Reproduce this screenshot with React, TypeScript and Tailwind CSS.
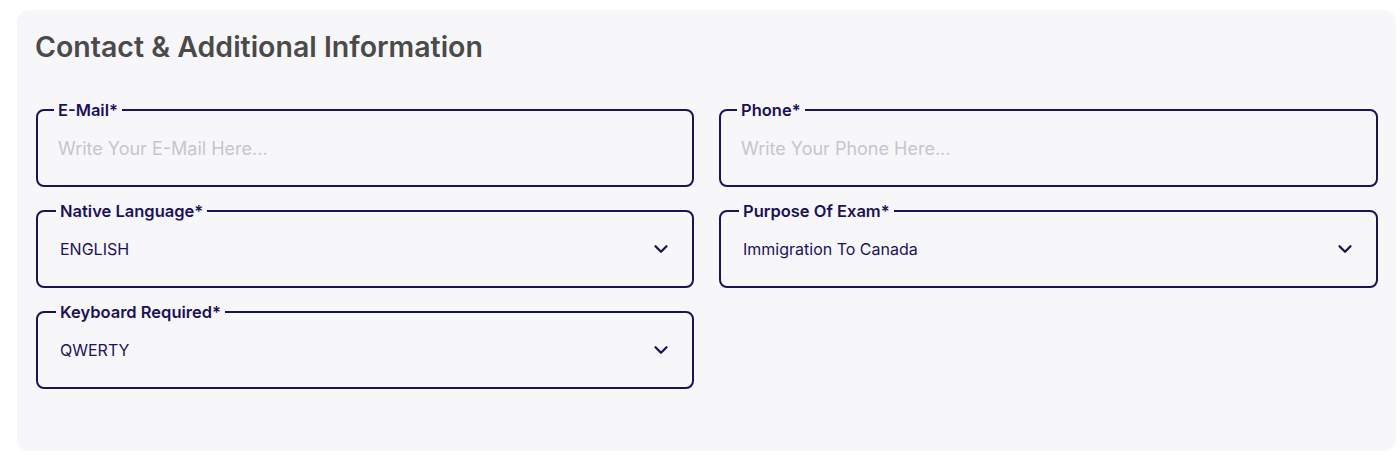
import React from 'react'
import { ChevronDown } from 'lucide-react'

const navy = 'border-[#1b1257]'

function TextField({ label, placeholder }: { label: string; placeholder: string }) {
  return (
    <fieldset className={`border-2 ${navy} rounded-lg px-[20px] pb-[24px]`}>
      <legend className="ml-[-4px] px-[4px] text-[16.5px] leading-[20px] font-semibold text-[#1b1257]">{label}</legend>
      <input
        type="text"
        placeholder={placeholder}
        className="w-full bg-transparent pt-[17px] text-[18px] leading-[24px] text-[#1b1257] outline-none placeholder:text-[#c6c6c9]"
      />
    </fieldset>
  )
}

function SelectField({ label, value }: { label: string; value: string }) {
  return (
    <fieldset className={`border-2 ${navy} rounded-lg pl-[22px] pr-[20px] pb-[25px]`}>
      <legend className="ml-[-4px] px-[4px] text-[16.5px] leading-[20px] font-semibold text-[#1b1257]">{label}</legend>
      <div className="flex items-center justify-between pt-[16px] h-[40px]">
        <span className="text-[16px] text-[#1b1257]">{value}</span>
        <ChevronDown className="w-[22px] h-[22px] text-[#1b1257]" strokeWidth={2.5} />
      </div>
    </fieldset>
  )
}

export default function App() {
  return (
    <div className="bg-white min-h-screen pt-[10px] px-[17px]" style={{ fontFamily: 'Inter, "Noto Sans", sans-serif' }}>
      <div className="rounded-xl bg-[#f7f7fa] pl-[19px] pr-[18px] pt-[20px] pb-[62px] w-[1379px]">
        <h2 className="text-[28.5px] leading-[34px] font-semibold text-[#4a4a4a] mb-[36px] ml-[-1px]">
          Contact &amp; Additional Information
        </h2>
        <div className="grid grid-cols-[658px_659px] gap-x-[25px] gap-y-[14px]">
          <TextField label="E-Mail*" placeholder="Write Your E-Mail Here..." />
          <TextField label="Phone*" placeholder="Write Your Phone Here..." />
          <SelectField label="Native Language*" value="ENGLISH" />
          <SelectField label="Purpose Of Exam*" value="Immigration To Canada" />
          <SelectField label="Keyboard Required*" value="QWERTY" />
        </div>
      </div>
    </div>
  )
}
